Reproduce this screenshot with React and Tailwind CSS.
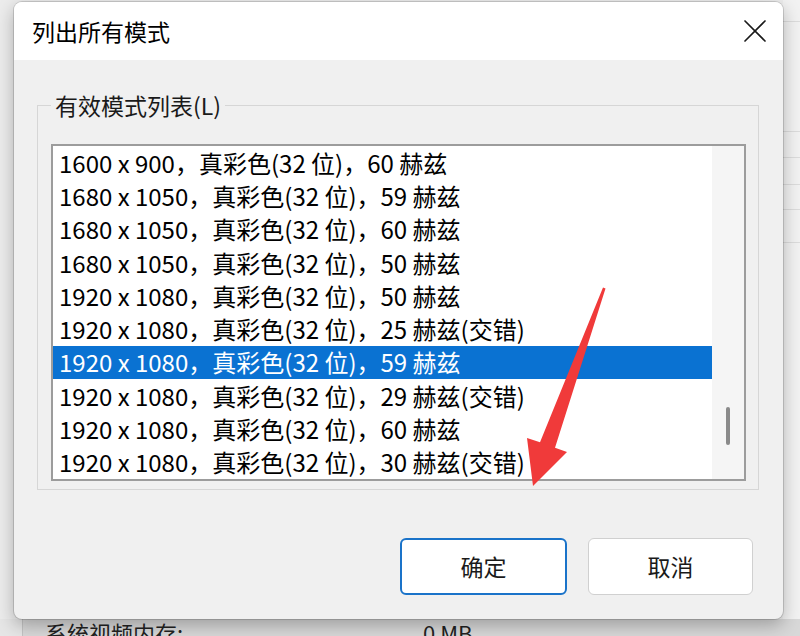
import { X } from "lucide-react";

const modes = [
  "1600 x 900，真彩色(32 位)，60 赫兹",
  "1680 x 1050，真彩色(32 位)，59 赫兹",
  "1680 x 1050，真彩色(32 位)，60 赫兹",
  "1680 x 1050，真彩色(32 位)，50 赫兹",
  "1920 x 1080，真彩色(32 位)，50 赫兹",
  "1920 x 1080，真彩色(32 位)，25 赫兹(交错)",
  "1920 x 1080，真彩色(32 位)，59 赫兹",
  "1920 x 1080，真彩色(32 位)，29 赫兹(交错)",
  "1920 x 1080，真彩色(32 位)，60 赫兹",
  "1920 x 1080，真彩色(32 位)，30 赫兹(交错)",
];

const font = { fontFamily: '"Noto Sans CJK SC", "Noto Sans", sans-serif' };

export default function App() {
  const selected = 6;

  return (
    <div className="relative w-[800px] h-[636px] overflow-hidden bg-[#ececec] text-black" style={font}>
      {/* window behind the dialog */}
      <div className="h-full flex flex-col">
        <div className="flex-1 flex justify-end">
          <div className="w-[17px] flex flex-col bg-[#f2f2f2]">
            <div className="h-[22px] border-b border-[#dcdcdc]" />
            <div className="h-[110px] border-b border-[#dcdcdc]" />
            <div className="h-[26px] border-b border-[#dcdcdc]" />
            <div className="h-[27px] border-b border-[#dcdcdc]" />
            <div className="h-[25px] border-b border-[#dcdcdc]" />
            <div className="h-[33px] border-b border-[#dcdcdc]" />
          </div>
        </div>
        <div className="h-[17px] flex bg-[#d8d8d8]">
          <div className="w-[23px] bg-[#e6e6e6] border-r border-[#c4c4c4]" />
          <div className="w-[400px] pl-[22px] text-[22px] leading-[22px] pt-[2px] text-[#222]">系统视频内存:</div>
          <div className="text-[22px] leading-[22px] pt-[2px] text-[#222]">0 MB</div>
        </div>
      </div>

      {/* dialog */}
      <div className="absolute left-[14px] top-[2px] w-[769px] h-[617px] rounded-[8px] overflow-hidden bg-[#f0f0f0] flex flex-col shadow-[0_0_0_1px_rgba(0,0,0,0.14),0_6px_18px_rgba(0,0,0,0.28)]">
        <div className="h-[58px] shrink-0 bg-white flex items-center justify-between pl-[18px] pr-[8px]">
          <span className="text-[23px] leading-none">列出所有模式</span>
          <X size={40} strokeWidth={1} className="text-[#1a1a1a]" />
        </div>

        <div className="relative mt-[45px] ml-[23px] mr-[24px] border border-[#d6d6d6] pt-[38px] pl-[13px] pr-[12px] pb-[8px]">
          <span className="absolute -top-[16px] left-[13px] px-[4px] bg-[#f0f0f0] text-[23px] leading-[30px] text-[#1a1a1a]">
            有效模式列表(L)
          </span>

          <div className="border-2 border-[#9c9c9c] bg-white flex">
            <div className="flex-1 flex flex-col">
              {modes.map((m, i) => (
                <div
                  key={i}
                  className={
                    "h-[33.3px] flex items-center pl-[6px] text-[24px] whitespace-nowrap " +
                    (i === selected ? "bg-[#0a72d2] text-white" : "")
                  }
                >
                  {m}
                </div>
              ))}
            </div>
            <div className="w-[32px] bg-[#f5f5f5] flex justify-center pt-[261px]">
              <div className="w-[4px] h-[38px] rounded-full bg-[#8a8a8a]" />
            </div>
          </div>
        </div>

        <div className="mt-[48px] flex justify-end gap-[21px] pr-[30px]">
          <button className="w-[167px] h-[57px] rounded-[6px] bg-white border-2 border-[#1a73c9] text-[23px] text-[#1a1a1a]">
            确定
          </button>
          <button className="w-[165px] h-[57px] rounded-[6px] bg-white border border-[#d0d0d0] text-[23px] text-[#1a1a1a]">
            取消
          </button>
        </div>
      </div>

      {/* red annotation arrow */}
      <svg className="absolute inset-0 pointer-events-none" width="800" height="636" viewBox="0 0 800 636">
        <polygon
          points="605.5,288.5 555,447.7 567,452 533,486 527,438 540,442.3 603,287.5"
          fill="#f03a3a"
        />
      </svg>
    </div>
  );
}
